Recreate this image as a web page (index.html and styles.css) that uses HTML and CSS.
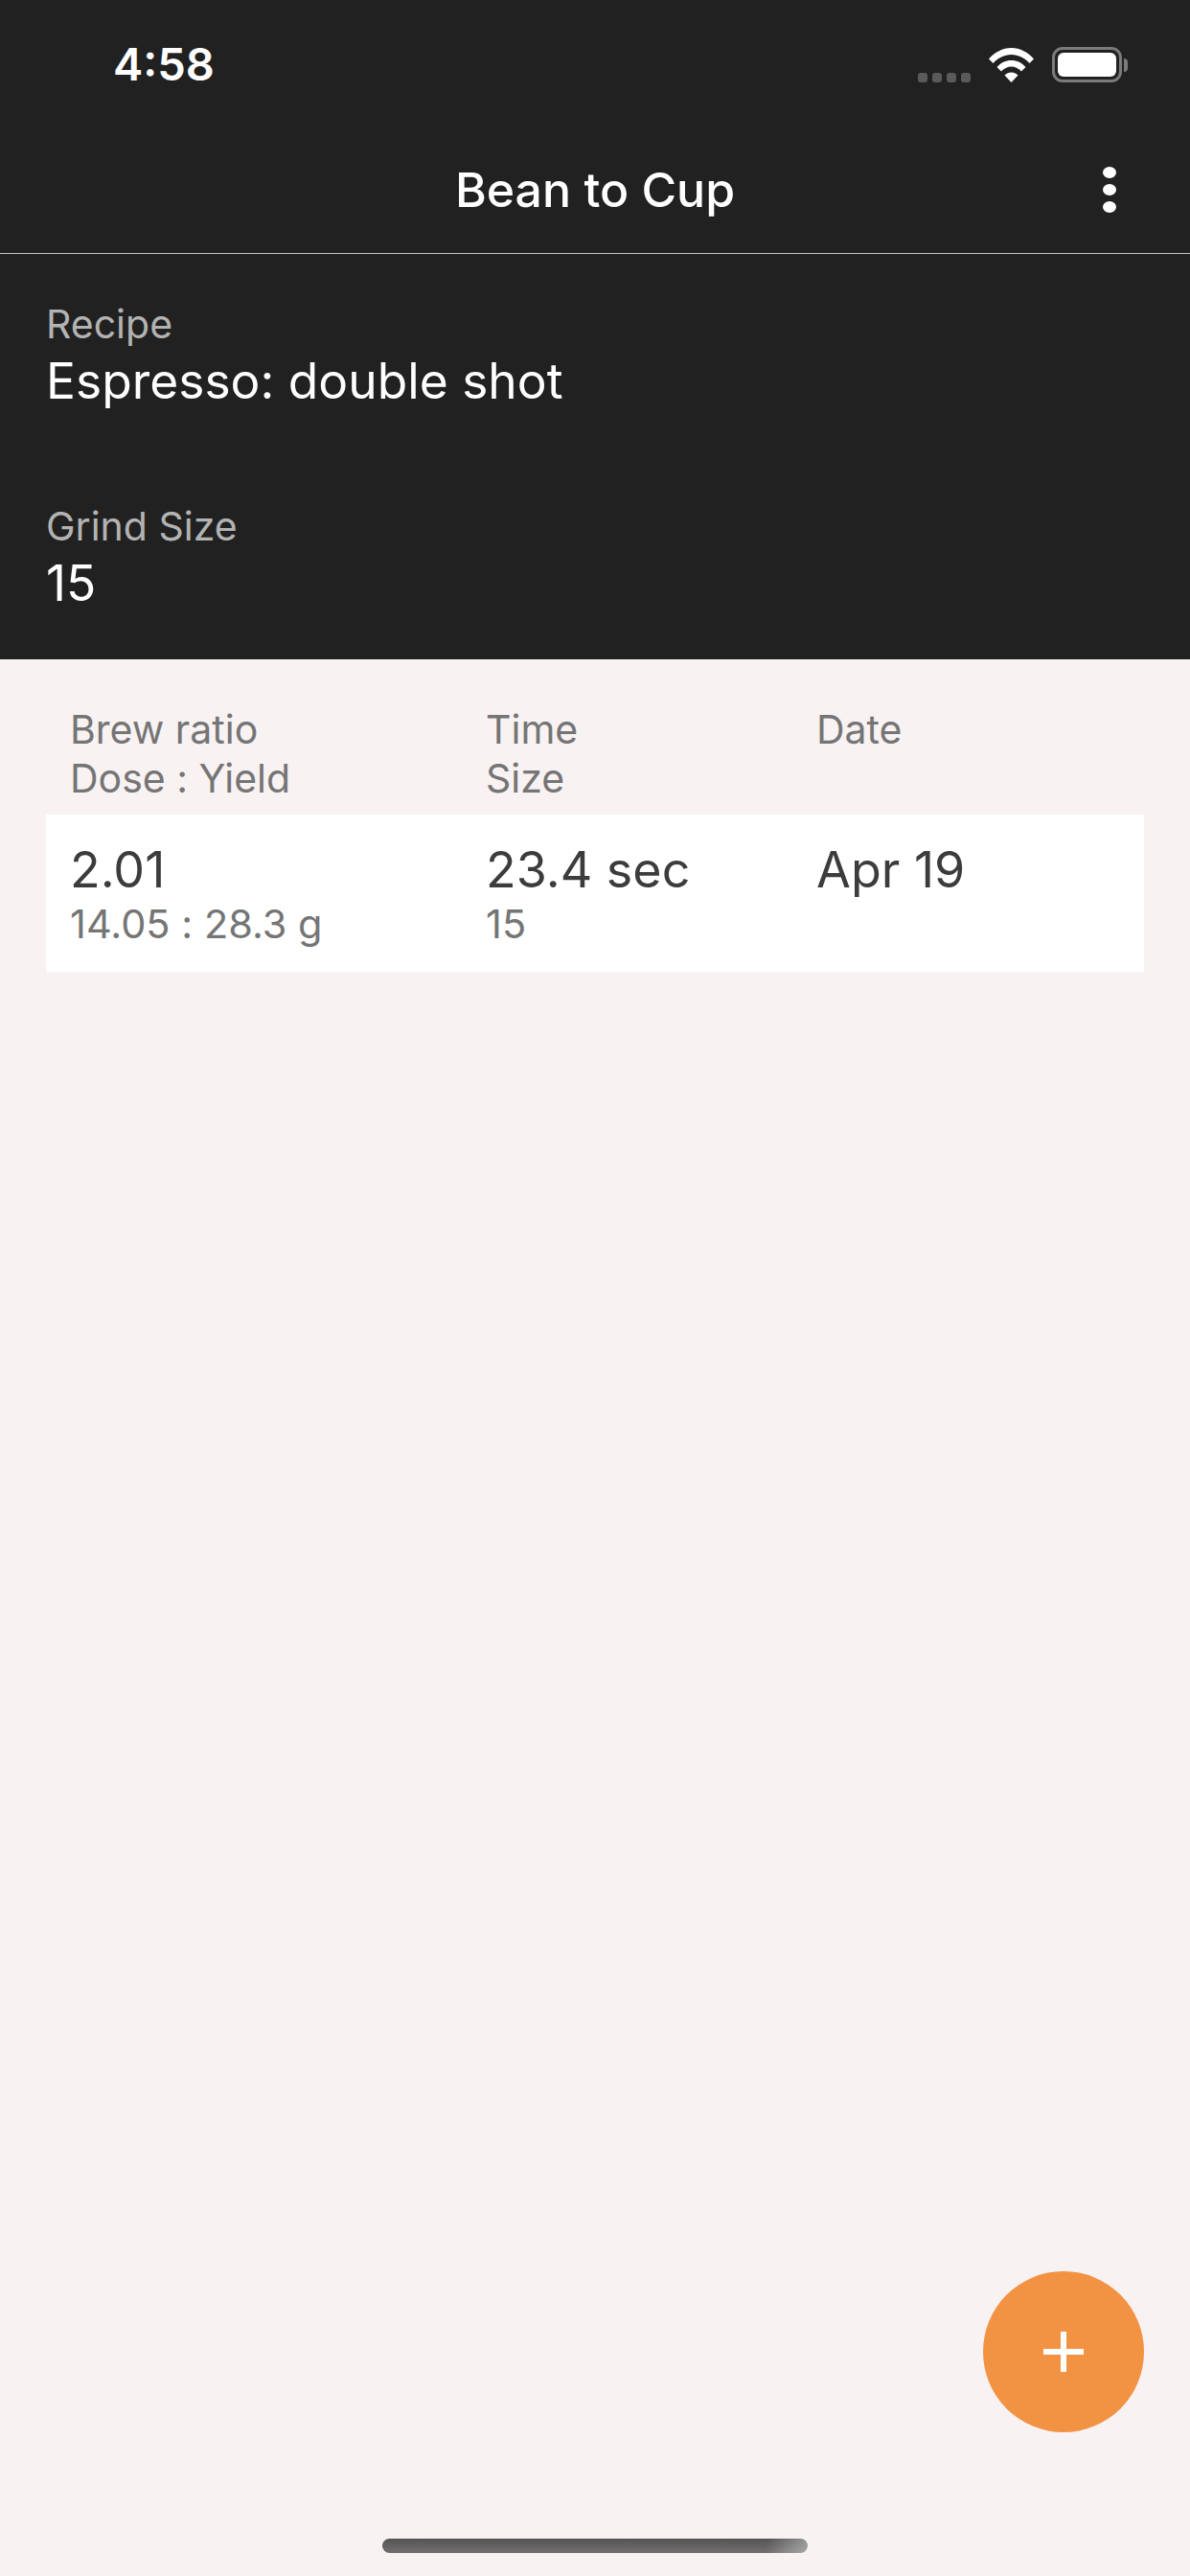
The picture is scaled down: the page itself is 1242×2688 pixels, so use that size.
FILE: index.html
```html
<!DOCTYPE html>
<html lang="en">
<head>
    <meta charset="UTF-8">
    <meta name="viewport" content="width=device-width, initial-scale=1.0">
    <title>Bean to Cup</title>
    <link rel="stylesheet" href="styles.css">
</head>
<body>
    <div class="container">
        <div class="header">
            <div class="status-bar">
                <span class="status-time">4:58</span>
                <div class="status-icons">
                    <div class="signal-dots">
                        <span class="signal-dot"></span>
                        <span class="signal-dot"></span>
                        <span class="signal-dot"></span>
                        <span class="signal-dot"></span>
                    </div>
                    <svg class="wifi-icon" width="47" height="36" viewBox="0 0 47 36">
                        <path fill="#fff" d="M0 11.5C6 4.5 14.5 0 23.5 0S41 4.500 47 11.500L42.500 16C37.500 10.500 31 7 23.500 7S9.500 10.500 4.500 16Z"/>
                        <path fill="#fff" d="M8.500 20C12.500 15.500 17.500 13 23.500 13S34.500 15.500 38.500 20L34 24.500C31.500 21.500 27.500 19.500 23.500 19.500S15.500 21.500 13 24.500Z"/>
                        <path fill="#fff" d="M16.500 28.500C18.500 26.500 21 25.500 23.500 25.500S28.500 26.500 30.500 28.500L23.500 36Z"/>
                    </svg>
                    <div class="battery">
                        <div class="battery-body"><div class="battery-fill"></div></div>
                        <div class="battery-nub"></div>
                    </div>
                </div>
            </div>
            <div class="app-bar">
                <span class="app-title">Bean to Cup</span>
                <div class="menu-button">
                    <span class="menu-dot"></span>
                    <span class="menu-dot"></span>
                    <span class="menu-dot"></span>
                </div>
            </div>
            <div class="summary">
                <div class="summary-item">
                    <div class="summary-label">Recipe</div>
                    <div class="summary-value">Espresso: double shot</div>
                </div>
                <div class="summary-item">
                    <div class="summary-label">Grind Size</div>
                    <div class="summary-value">15</div>
                </div>
            </div>
        </div>

        <div class="content">
            <div class="table-head table-grid">
                <div>Brew ratio<br>Dose : Yield</div>
                <div>Time<br>Size</div>
                <div>Date</div>
            </div>
            <div class="table-row table-grid">
                <div>
                    <div class="cell-main">2.01</div>
                    <div class="cell-sub">14.05 : 28.3 g</div>
                </div>
                <div>
                    <div class="cell-main">23.4 sec</div>
                    <div class="cell-sub">15</div>
                </div>
                <div>
                    <div class="cell-main">Apr 19</div>
                </div>
            </div>
        </div>

        <button class="fab" aria-label="Add">
            <svg width="42" height="42" viewBox="0 0 42 42">
                <path fill="#fff" d="M18 0h6v18h18v6H24v18h-6V24H0v-6h18z"/>
            </svg>
        </button>
        <div class="home-bar"></div>
    </div>
</body>
</html>
```

FILE: styles.css
```css
* {
    box-sizing: border-box;
}
body {
    margin: 0;
    font-family: Inter, Roboto, "Liberation Sans", sans-serif;
}
.container {
    width: 1242px;
    height: 2688px;
    position: relative;
    overflow: hidden;
    display: flex;
    flex-direction: column;
    background: #f8f2f2;
}
.header {
    height: 688px;
    background: #212121;
    color: #fff;
}
.status-bar {
    height: 132px;
    padding: 38px 65px 0 118px;
    display: flex;
    justify-content: space-between;
    align-items: flex-start;
}
.status-time {
    font-size: 47px;
    line-height: 58px;
    font-weight: 600;
}
.status-icons {
    display: flex;
    align-items: flex-end;
    margin-top: 11px;
}
.signal-dots {
    display: flex;
    gap: 5px;
    margin-right: 19px;
}
.signal-dot {
    width: 10px;
    height: 10px;
    border-radius: 3px;
    background: #5a5a5a;
}
.wifi-icon {
    display: block;
    margin-right: 19px;
}
.battery {
    display: flex;
    align-items: center;
}
.battery-body {
    width: 73px;
    height: 37px;
    padding: 3px;
    border: 3px solid #7b7b7b;
    border-radius: 11px;
}
.battery-fill {
    height: 100%;
    background: #fff;
    border-radius: 6px;
}
.battery-nub {
    width: 4px;
    height: 14px;
    margin-left: 2px;
    background: #7b7b7b;
    border-radius: 0 4px 4px 0;
}
.app-bar {
    height: 133px;
    display: flex;
    align-items: center;
    justify-content: center;
    position: relative;
    border-bottom: 1px solid #c4c4c4;
}
.app-title {
    font-size: 50px;
    font-weight: 500;
}
.menu-button {
    position: absolute;
    right: 77px;
    top: 42px;
    display: flex;
    flex-direction: column;
    gap: 6px;
}
.menu-dot {
    width: 14px;
    height: 12px;
    border-radius: 50%;
    background: #fff;
}
.summary {
    padding: 49px 48px 0;
}
.summary-item {
    margin-bottom: 93px;
}
.summary-label {
    font-size: 41px;
    line-height: 48px;
    color: #b3b3b3;
}
.summary-value {
    font-size: 51.5px;
    line-height: 70px;
}
.content {
    padding: 48px 48px 0;
    font-feature-settings: "calt" 0;
}
.table-grid {
    display: grid;
    grid-template-columns: 434px 345px 1fr;
    padding-left: 25px;
}
.table-head {
    height: 114px;
    font-size: 41px;
    line-height: 51px;
    color: #757575;
}
.table-row {
    height: 164px;
    padding-top: 27px;
    background: #fff;
}
.cell-main {
    font-size: 52px;
    line-height: 62px;
    color: #3c3c3c;
}
.cell-sub {
    font-size: 41.5px;
    line-height: 50px;
    color: #757575;
}
.fab {
    position: absolute;
    left: 1026px;
    top: 2370px;
    width: 168px;
    height: 168px;
    border: none;
    padding: 0;
    border-radius: 50%;
    background: #f29343;
    display: flex;
    align-items: center;
    justify-content: center;
}
.home-bar {
    position: absolute;
    left: 399px;
    top: 2649px;
    width: 444px;
    height: 15px;
    border-radius: 8px;
    background: linear-gradient(100deg, rgba(255,255,255,0) 90%, rgba(255,255,255,.4) 100%), linear-gradient(180deg, #555353, #706f6e);
}
```
